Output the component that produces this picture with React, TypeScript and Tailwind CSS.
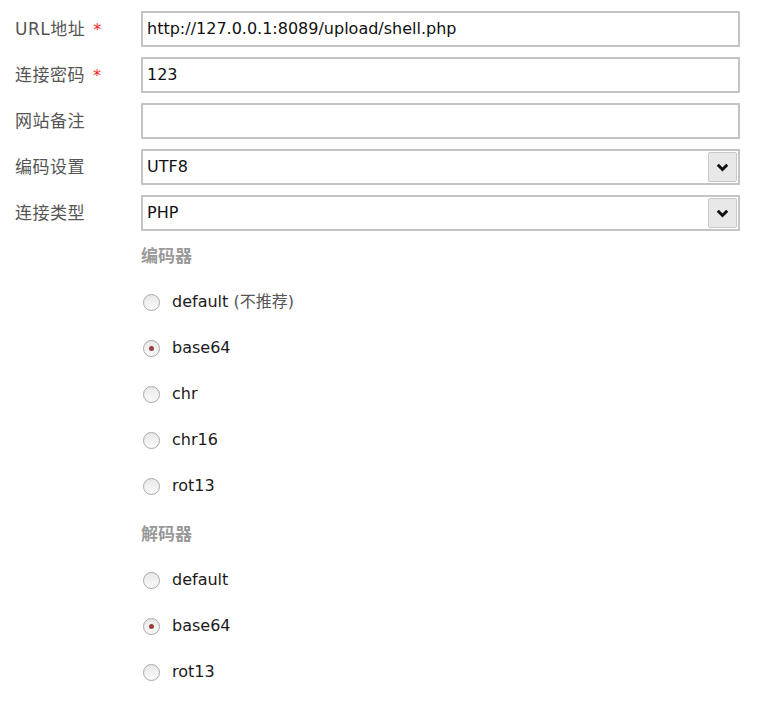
import React from "react";

const font = "font-['DejaVu_Sans','Noto_Sans_CJK_SC',sans-serif]";

function Label({ text, required }: { text: string; required?: boolean }) {
  return (
    <div className="w-[126px] shrink-0 text-[17px] text-[#555] leading-none tracking-[0.5px]">
      {text}
      {required && <span className="text-[#f22] ml-[8px] text-[16px]">*</span>}
    </div>
  );
}

function TextRow({ label, value, required }: { label: string; value: string; required?: boolean }) {
  return (
    <div className="flex items-center h-[36px] mb-[10px]">
      <Label text={label} required={required} />
      <div className="w-[599px] h-[36px] border-2 border-[#c4c4c4] bg-white flex items-center px-[4px] text-[16px] text-[#111]">
        {value}
      </div>
    </div>
  );
}

function SelectRow({ label, value }: { label: string; value: string }) {
  return (
    <div className="flex items-center h-[36px] mb-[10px]">
      <Label text={label} />
      <div className="w-[599px] h-[36px] border-2 border-[#c4c4c4] bg-white flex items-center pl-[4px] pr-[1px] text-[16px] text-[#111]">
        <span className="flex-1">{value}</span>
        <div className="w-[29px] h-[30px] rounded-[2px] border border-[#c8c8c8] bg-[#e8e8e8] flex items-center justify-center">
          <svg width="13" height="9" viewBox="0 0 13 9">
            <path d="M1.8 1.8 L6.5 6.5 L11.2 1.8" fill="none" stroke="#111" strokeWidth="3" />
          </svg>
        </div>
      </div>
    </div>
  );
}

function Radio({ label, checked }: { label: React.ReactNode; checked?: boolean }) {
  return (
    <div className="flex items-center h-[46px]">
      <div className="w-[17px] h-[17px] ml-[2px] rounded-full border border-[#a8a8a8] bg-gradient-to-b from-[#e8e8e8] to-[#fafafa] flex items-center justify-center">
        {checked && <div className="w-[5px] h-[5px] rounded-full bg-[#9a4040]" />}
      </div>
      <span className="ml-[12px] text-[16px] text-[#1a1a1a]">{label}</span>
    </div>
  );
}

export default function App() {
  return (
    <div className={`${font} bg-white w-[776px] h-[712px] pl-[15px] pt-[11px]`}>
      <TextRow label="URL地址" value="http://127.0.0.1:8089/upload/shell.php" required />
      <TextRow label="连接密码" value="123" required />
      <TextRow label="网站备注" value="" />
      <SelectRow label="编码设置" value="UTF8" />
      <SelectRow label="连接类型" value="PHP" />
      <div className="ml-[126px]">
        <div className="h-[28px] mt-[6px] flex items-center text-[17px] font-bold text-[#999] font-['Noto_Sans_CJK_SC',serif]">
          编码器
        </div>
        <div className="mt-[10px]">
          <Radio label={<>default <span className="text-[#555]">(不推荐)</span></>} />
          <Radio label="base64" checked />
          <Radio label="chr" />
          <Radio label="chr16" />
          <Radio label="rot13" />
        </div>
        <div className="h-[28px] mt-[10px] flex items-center text-[17px] font-bold text-[#999] font-['Noto_Sans_CJK_SC',serif]">
          解码器
        </div>
        <div className="mt-[10px]">
          <Radio label="default" />
          <Radio label="base64" checked />
          <Radio label="rot13" />
        </div>
      </div>
    </div>
  );
}
